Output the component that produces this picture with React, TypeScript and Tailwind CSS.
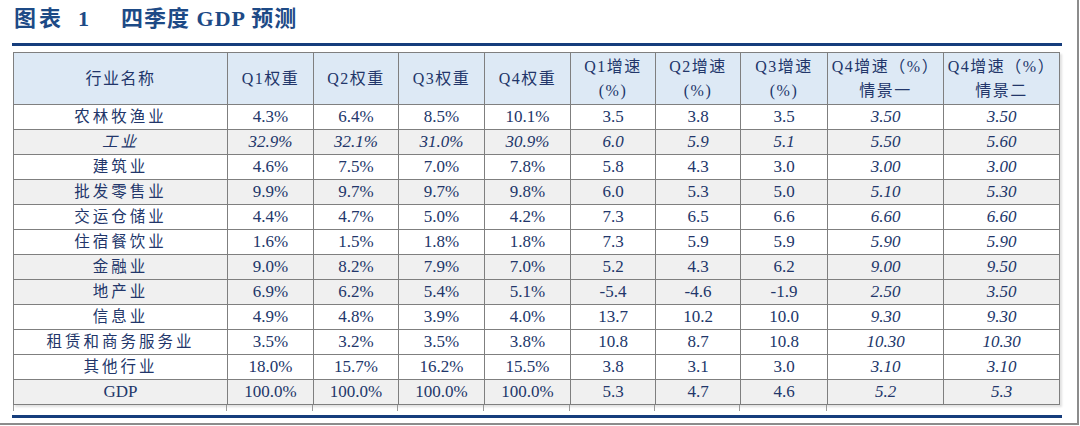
import React from "react";

const cols = [214, 86, 85, 86, 86, 85, 85, 87, 116, 116];

const rows: { name: string; v: string[]; gray?: boolean; it?: boolean }[] = [
  { name: "农林牧渔业", v: ["4.3%", "6.4%", "8.5%", "10.1%", "3.5", "3.8", "3.5", "3.50", "3.50"] },
  { name: "工业", v: ["32.9%", "32.1%", "31.0%", "30.9%", "6.0", "5.9", "5.1", "5.50", "5.60"], gray: true, it: true },
  { name: "建筑业", v: ["4.6%", "7.5%", "7.0%", "7.8%", "5.8", "4.3", "3.0", "3.00", "3.00"] },
  { name: "批发零售业", v: ["9.9%", "9.7%", "9.7%", "9.8%", "6.0", "5.3", "5.0", "5.10", "5.30"], gray: true },
  { name: "交运仓储业", v: ["4.4%", "4.7%", "5.0%", "4.2%", "7.3", "6.5", "6.6", "6.60", "6.60"] },
  { name: "住宿餐饮业", v: ["1.6%", "1.5%", "1.8%", "1.8%", "7.3", "5.9", "5.9", "5.90", "5.90"] },
  { name: "金融业", v: ["9.0%", "8.2%", "7.9%", "7.0%", "5.2", "4.3", "6.2", "9.00", "9.50"], gray: true },
  { name: "地产业", v: ["6.9%", "6.2%", "5.4%", "5.1%", "-5.4", "-4.6", "-1.9", "2.50", "3.50"], gray: true },
  { name: "信息业", v: ["4.9%", "4.8%", "3.9%", "4.0%", "13.7", "10.2", "10.0", "9.30", "9.30"] },
  { name: "租赁和商务服务业", v: ["3.5%", "3.2%", "3.5%", "3.8%", "10.8", "8.7", "10.8", "10.30", "10.30"] },
  { name: "其他行业", v: ["18.0%", "15.7%", "16.2%", "15.5%", "3.8", "3.1", "3.0", "3.10", "3.10"] },
  { name: "GDP", v: ["100.0%", "100.0%", "100.0%", "100.0%", "5.3", "4.7", "4.6", "5.2", "5.3"], gray: true },
];

const heads: string[][] = [
  ["行业名称"],
  ["Q1权重"],
  ["Q2权重"],
  ["Q3权重"],
  ["Q4权重"],
  ["Q1增速", "(%)"],
  ["Q2增速", "(%)"],
  ["Q3增速", "(%)"],
  ["Q4增速（%）", "情景一"],
  ["Q4增速（%）", "情景二"],
];

export default function App() {
  return (
    <div
      className="w-[1079px] h-[425px] bg-white border-r-2 border-b-2 border-[#8c8c8c] overflow-hidden"
      style={{ fontFamily: '"Liberation Serif", "Noto Sans CJK SC", serif' }}
    >
      {/* TITLE */}
      <div className="h-[43px] pl-[14px] pt-[5px] text-[22px] leading-[28px] font-bold text-[#1d4a86] flex gap-[14px]">
        <span className="tracking-[3px]">图表</span>
        <span>1</span>
        <span className="ml-[18px] tracking-[1px]">四季度 GDP 预测</span>
      </div>
      <div className="ml-[12px] w-[1050px] h-[3px] bg-[#163d7c]" />

      {/* TABLE */}
      <div className="ml-[13px] mt-[6px] w-fit shadow-[2px_2px_2px_rgba(0,0,0,0.12)]">
        <table className="table-fixed border-collapse text-[#22366a] text-[17px]">
          <colgroup>
            {cols.map((w, i) => (
              <col key={i} style={{ width: w }} />
            ))}
          </colgroup>
          <thead>
            <tr className="bg-[#dde9f5] h-[52px]">
              {heads.map((h, i) => (
                <th
                  key={i}
                  className="border border-[#7f7f7f] font-normal text-center text-[16px] leading-[24px] px-0 tracking-[1.5px]"
                >
                  {h.map((l, j) => (
                    <div key={j}>{l}</div>
                  ))}
                </th>
              ))}
            </tr>
          </thead>
          <tbody>
            {rows.map((r, i) => (
              <tr key={i} className={`h-[25px] ${r.gray ? "bg-[#f0f0f0]" : "bg-white"}`}>
                <td
                  className={`border border-[#7f7f7f] text-center leading-[24px] ${
                    r.name === "GDP" ? "" : "text-[15.5px] tracking-[3px]"
                  } ${r.it ? "italic" : ""}`}
                >
                  {r.name}
                </td>
                {r.v.map((v, j) => (
                  <td
                    key={j}
                    className={`border border-[#7f7f7f] text-center leading-[24px] ${r.it || j >= 7 ? "italic" : ""}`}
                  >
                    {v}
                  </td>
                ))}
              </tr>
            ))}
          </tbody>
        </table>
      </div>
      {/* grid lines running past the last row */}
      <div className="ml-[13px] h-[6px] flex">
        {cols.slice(0, 8).map((w, i) => (
          <div key={i} style={{ width: w }} className={`shrink-0 border-r border-[#9a9a9a] ${i === 0 ? "border-l" : ""}`} />
        ))}
      </div>
      <div className="ml-[12px] mt-[4px] w-[1050px] h-[3px] bg-[#163d7c]" />
    </div>
  );
}
